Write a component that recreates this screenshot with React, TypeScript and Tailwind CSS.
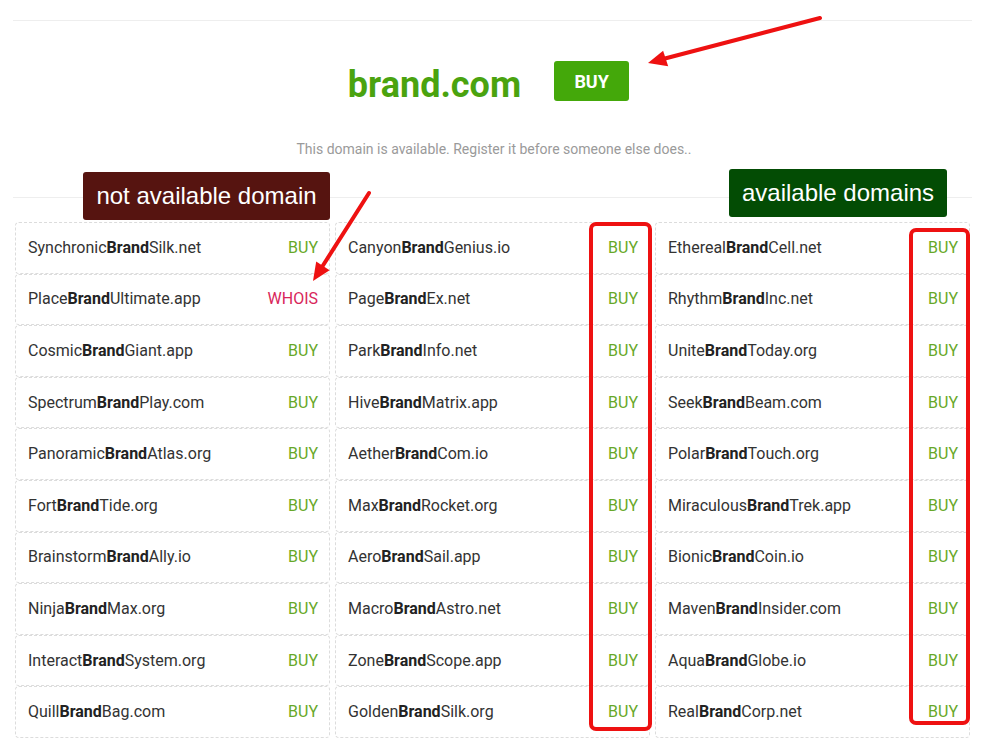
import React from "react";

type Item = { pre: string; post: string; whois?: boolean };

const col1: Item[] = [
  { pre: "Synchronic", post: "Silk.net" },
  { pre: "Place", post: "Ultimate.app", whois: true },
  { pre: "Cosmic", post: "Giant.app" },
  { pre: "Spectrum", post: "Play.com" },
  { pre: "Panoramic", post: "Atlas.org" },
  { pre: "Fort", post: "Tide.org" },
  { pre: "Brainstorm", post: "Ally.io" },
  { pre: "Ninja", post: "Max.org" },
  { pre: "Interact", post: "System.org" },
  { pre: "Quill", post: "Bag.com" },
];
const col2: Item[] = [
  { pre: "Canyon", post: "Genius.io" },
  { pre: "Page", post: "Ex.net" },
  { pre: "Park", post: "Info.net" },
  { pre: "Hive", post: "Matrix.app" },
  { pre: "Aether", post: "Com.io" },
  { pre: "Max", post: "Rocket.org" },
  { pre: "Aero", post: "Sail.app" },
  { pre: "Macro", post: "Astro.net" },
  { pre: "Zone", post: "Scope.app" },
  { pre: "Golden", post: "Silk.org" },
];
const col3: Item[] = [
  { pre: "Ethereal", post: "Cell.net" },
  { pre: "Rhythm", post: "Inc.net" },
  { pre: "Unite", post: "Today.org" },
  { pre: "Seek", post: "Beam.com" },
  { pre: "Polar", post: "Touch.org" },
  { pre: "Miraculous", post: "Trek.app" },
  { pre: "Bionic", post: "Coin.io" },
  { pre: "Maven", post: "Insider.com" },
  { pre: "Aqua", post: "Globe.io" },
  { pre: "Real", post: "Corp.net" },
];

const rows: Item[] = [];
for (let i = 0; i < 10; i++) {
  rows.push(col1[i], col2[i], col3[i]);
}

function Card({ item }: { item: Item }) {
  return (
    <div className="h-[51.6px] flex items-center justify-between pl-[12px] pr-[11px] border border-dashed border-[#dcdcdc] rounded-[4px] bg-white">
      <span className="text-[16px] text-[#333333]">
        {item.pre}
        <b className="font-bold text-[#222]">Brand</b>
        {item.post}
      </span>
      {item.whois ? (
        <span className="text-[16px] text-[#d8265a]">WHOIS</span>
      ) : (
        <span className="text-[16px] text-[#67a828]">BUY</span>
      )}
    </div>
  );
}

export default function App() {
  return (
    <div
      className="relative w-[988px] h-[744px] bg-white overflow-hidden"
      style={{ fontFamily: "Roboto, 'Liberation Sans', sans-serif" }}
    >
      <div className="pt-[20px]">
        <div className="ml-[13px] w-[959px] h-px bg-[#eeeeee]" />
        <div className="mt-[40px] h-[40px] flex items-center justify-center gap-[33px] pr-[11px]">
          <span className="mt-[8px] text-[36px] font-bold text-[#4aa30f] leading-[42px]">brand.com</span>
          <span className="w-[75px] h-[40px] rounded-[3px] bg-[#44a80a] text-white font-bold text-[18px] flex items-center justify-center">
            BUY
          </span>
        </div>
        <div className="mt-[38px] h-[20px] text-center text-[14px] leading-[20px] text-[#9a9a9a]">
          This domain is available. Register it before someone else does..
        </div>
        <div className="mt-[38px] ml-[13px] w-[959px] h-px bg-[#eeeeee]" />
        <div className="mt-[24px] ml-[15px] w-[955px] grid grid-cols-3 gap-x-[5px]">
          {rows.map((it, i) => (
            <Card key={i} item={it} />
          ))}
        </div>
      </div>

      <div
        className="absolute left-[83px] top-[172px] w-[247px] h-[48px] rounded-[3px] bg-[#561410] text-white text-[24px] flex items-center justify-center"
        style={{ fontFamily: "'Liberation Sans', Arial, sans-serif" }}
      >
        not available domain
      </div>
      <div
        className="absolute left-[729px] top-[169px] w-[218px] h-[48px] rounded-[3px] bg-[#034c04] text-white text-[24px] flex items-center justify-center"
        style={{ fontFamily: "'Liberation Sans', Arial, sans-serif" }}
      >
        available domains
      </div>

      <svg
        className="absolute left-0 top-0 pointer-events-none"
        width="988"
        height="744"
        viewBox="0 0 988 744"
      >
        <rect x="591" y="224" width="59" height="505" rx="5" fill="none" stroke="#ee1111" strokeWidth="4" />
        <rect x="911" y="230" width="57" height="493" rx="5" fill="none" stroke="#ee1111" strokeWidth="4" />
        <line x1="820" y1="18" x2="664" y2="58.8" stroke="#ee1111" strokeWidth="4" strokeLinecap="round" />
        <polygon points="648,63 668.2,66.2 663.1,50.7" fill="#ee1111" />
        <line x1="369" y1="193" x2="322" y2="267" stroke="#ee1111" strokeWidth="4" strokeLinecap="round" />
        <polygon points="313,281 329.6,270.2 316.2,261.6" fill="#ee1111" />
      </svg>
    </div>
  );
}
